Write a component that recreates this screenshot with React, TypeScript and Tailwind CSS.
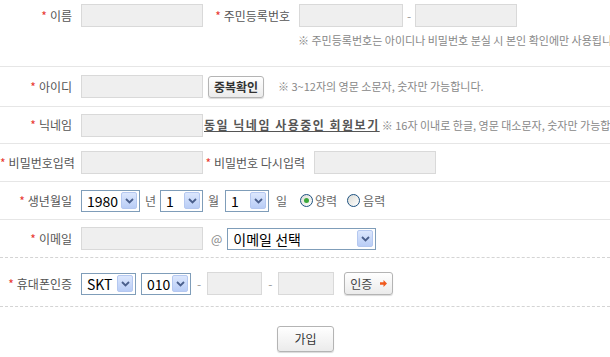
import React from "react";

const font = { fontFamily: '"Noto Sans CJK KR", "Noto Sans", sans-serif' };

const Star = () => <span className="text-[#e8382f] mr-[3px]">*</span>;

const Label = ({ children, className = "w-[72px]" }: { children: React.ReactNode; className?: string }) => (
  <div className={`${className} shrink-0 text-right text-[12px] text-[#555] whitespace-nowrap`}>
    <Star />
    {children}
  </div>
);

const Input = ({ className = "w-[122px]" }: { className?: string }) => (
  <div className={`${className} h-[23px] shrink-0 bg-[#efefef] border border-[#d9d9d9]`} />
);

const Arrow = () => (
  <div className="w-[16px] h-[17px] shrink-0 rounded-[2px] border border-[#b5c8f0] bg-gradient-to-b from-[#dce7fd] to-[#b9cdf6] flex items-center justify-center">
    <svg width="9" height="6" viewBox="0 0 9 6">
      <path d="M1 1 L4.5 4.5 L8 1" fill="none" stroke="#4a5f8c" strokeWidth="1.8" />
    </svg>
  </div>
);

const Select = ({ value, className }: { value: string; className: string }) => (
  <div className={`${className} h-[22px] shrink-0 bg-white border border-[#7f9db9] flex items-center pl-[5px] pr-[2px]`}>
    <span className="flex-1 text-[14px] text-black leading-none">{value}</span>
    <Arrow />
  </div>
);

const Radio = ({ checked }: { checked?: boolean }) => (
  <div className="w-[13px] h-[13px] rounded-full border border-[#1c5180] bg-gradient-to-br from-[#dcdcd6] to-white flex items-center justify-center">
    {checked && <div className="w-[5px] h-[5px] rounded-full bg-[#3ba83b]" />}
  </div>
);

const Btn = ({ children, className }: { children: React.ReactNode; className: string }) => (
  <div
    className={`${className} shrink-0 rounded-[3px] border border-[#b4b4b4] bg-gradient-to-b from-white to-[#ebebeb] shadow-[0_1px_1px_rgba(0,0,0,0.15)] flex items-center justify-center text-[#333] font-bold`}
  >
    {children}
  </div>
);

export default function App() {
  return (
    <div className="w-[610px] h-[357px] overflow-hidden bg-white" style={font}>
      {/* 이름 / 주민등록번호 */}
      <div className="h-[67px] border-b border-[#e6e6e6] pt-[4px]">
        <div className="flex items-center h-[23px]">
          <Label>이름</Label>
          <div className="ml-[9px]">
            <Input />
          </div>
          <Label className="w-[87px]">주민등록번호</Label>
          <div className="ml-[9px] flex items-center">
            <Input className="w-[104px]" />
            <span className="mx-[4px] text-[#999] text-[12px]">-</span>
            <Input className="w-[102px]" />
          </div>
        </div>
        <div className="pl-[298px] pt-[5px] text-[11px] text-[#888] whitespace-nowrap">
          ※ 주민등록번호는 아이디나 비밀번호 분실 시 본인 확인에만 사용됩니다
        </div>
      </div>

      {/* 아이디 */}
      <div className="h-[40px] border-b border-[#e6e6e6] flex items-center">
        <Label>아이디</Label>
        <div className="ml-[9px] flex items-center">
          <Input />
          <Btn className="ml-[5px] w-[56px] h-[22px] text-[12px]">중복확인</Btn>
          <span className="ml-[14px] text-[11px] text-[#888] whitespace-nowrap">
            ※ 3~12자의 영문 소문자, 숫자만 가능합니다.
          </span>
        </div>
      </div>

      {/* 닉네임 */}
      <div className="h-[37px] border-b border-[#e6e6e6] flex items-center">
        <Label>닉네임</Label>
        <div className="ml-[9px] flex items-center whitespace-nowrap">
          <Input />
          <span className="ml-[1px] text-[12px] font-bold text-[#555] underline tracking-[1.5px]">
            동일 닉네임 사용중인 회원보기
          </span>
          <span className="ml-[2px] text-[11px] text-[#888]">※ 16자 이내로 한글, 영문 대소문자, 숫자만 가능합니다</span>
        </div>
      </div>

      {/* 비밀번호 */}
      <div className="h-[38px] border-b border-[#e6e6e6] flex items-center">
        <Label>비밀번호입력</Label>
        <div className="ml-[9px]">
          <Input />
        </div>
        <Label className="w-[102px]">비밀번호 다시입력</Label>
        <div className="ml-[9px]">
          <Input />
        </div>
      </div>

      {/* 생년월일 */}
      <div className="h-[38px] border-b border-[#e6e6e6] flex items-center">
        <Label>생년월일</Label>
        <div className="ml-[9px] flex items-center text-[12px] text-[#666]">
          <Select value="1980" className="w-[59px]" />
          <span className="ml-[5px] w-[15px]">년</span>
          <Select value="1" className="w-[43px]" />
          <span className="ml-[5px] w-[17px]">월</span>
          <Select value="1" className="w-[44px]" />
          <span className="ml-[7px] w-[24px]">일</span>
          <Radio checked />
          <span className="ml-[2px]">양력</span>
          <span className="ml-[10px]">
            <Radio />
          </span>
          <span className="ml-[3px]">음력</span>
        </div>
      </div>

      {/* 이메일 */}
      <div className="h-[38px] border-b border-dashed border-[#d4d4d4] flex items-center">
        <Label>이메일</Label>
        <div className="ml-[9px] flex items-center">
          <Input />
          <span className="ml-[8px] mr-[5px] text-[12px] text-[#888]">@</span>
          <Select value="이메일 선택" className="w-[149px]" />
        </div>
      </div>

      {/* 휴대폰인증 */}
      <div className="h-[49px] border-b border-dashed border-[#d4d4d4] flex items-center pt-[3px]">
        <Label>휴대폰인증</Label>
        <div className="ml-[9px] flex items-center">
          <Select value="SKT" className="w-[55px]" />
          <Select value="010" className="ml-[5px] w-[50px]" />
          <span className="mx-[6px] text-[12px] text-[#999]">-</span>
          <Input className="w-[55px]" />
          <span className="mx-[6px] text-[12px] text-[#999]">-</span>
          <Input className="w-[56px]" />
          <Btn className="ml-[10px] w-[49px] h-[23px] text-[12px] font-normal gap-[8px]">
            <span className="text-[#444]">인증</span>
            <svg width="7" height="7" viewBox="0 0 7 7">
              <path d="M0 2.3 H3.5 V0 L7 3.5 L3.5 7 V4.7 H0 Z" fill="#f05a1e" />
            </svg>
          </Btn>
        </div>
      </div>

      <div className="flex justify-center pt-[19px] pl-[1px]">
        <Btn className="w-[57px] h-[26px] text-[12px] font-normal">
          <span className="text-[#333]">가입</span>
        </Btn>
      </div>
    </div>
  );
}
